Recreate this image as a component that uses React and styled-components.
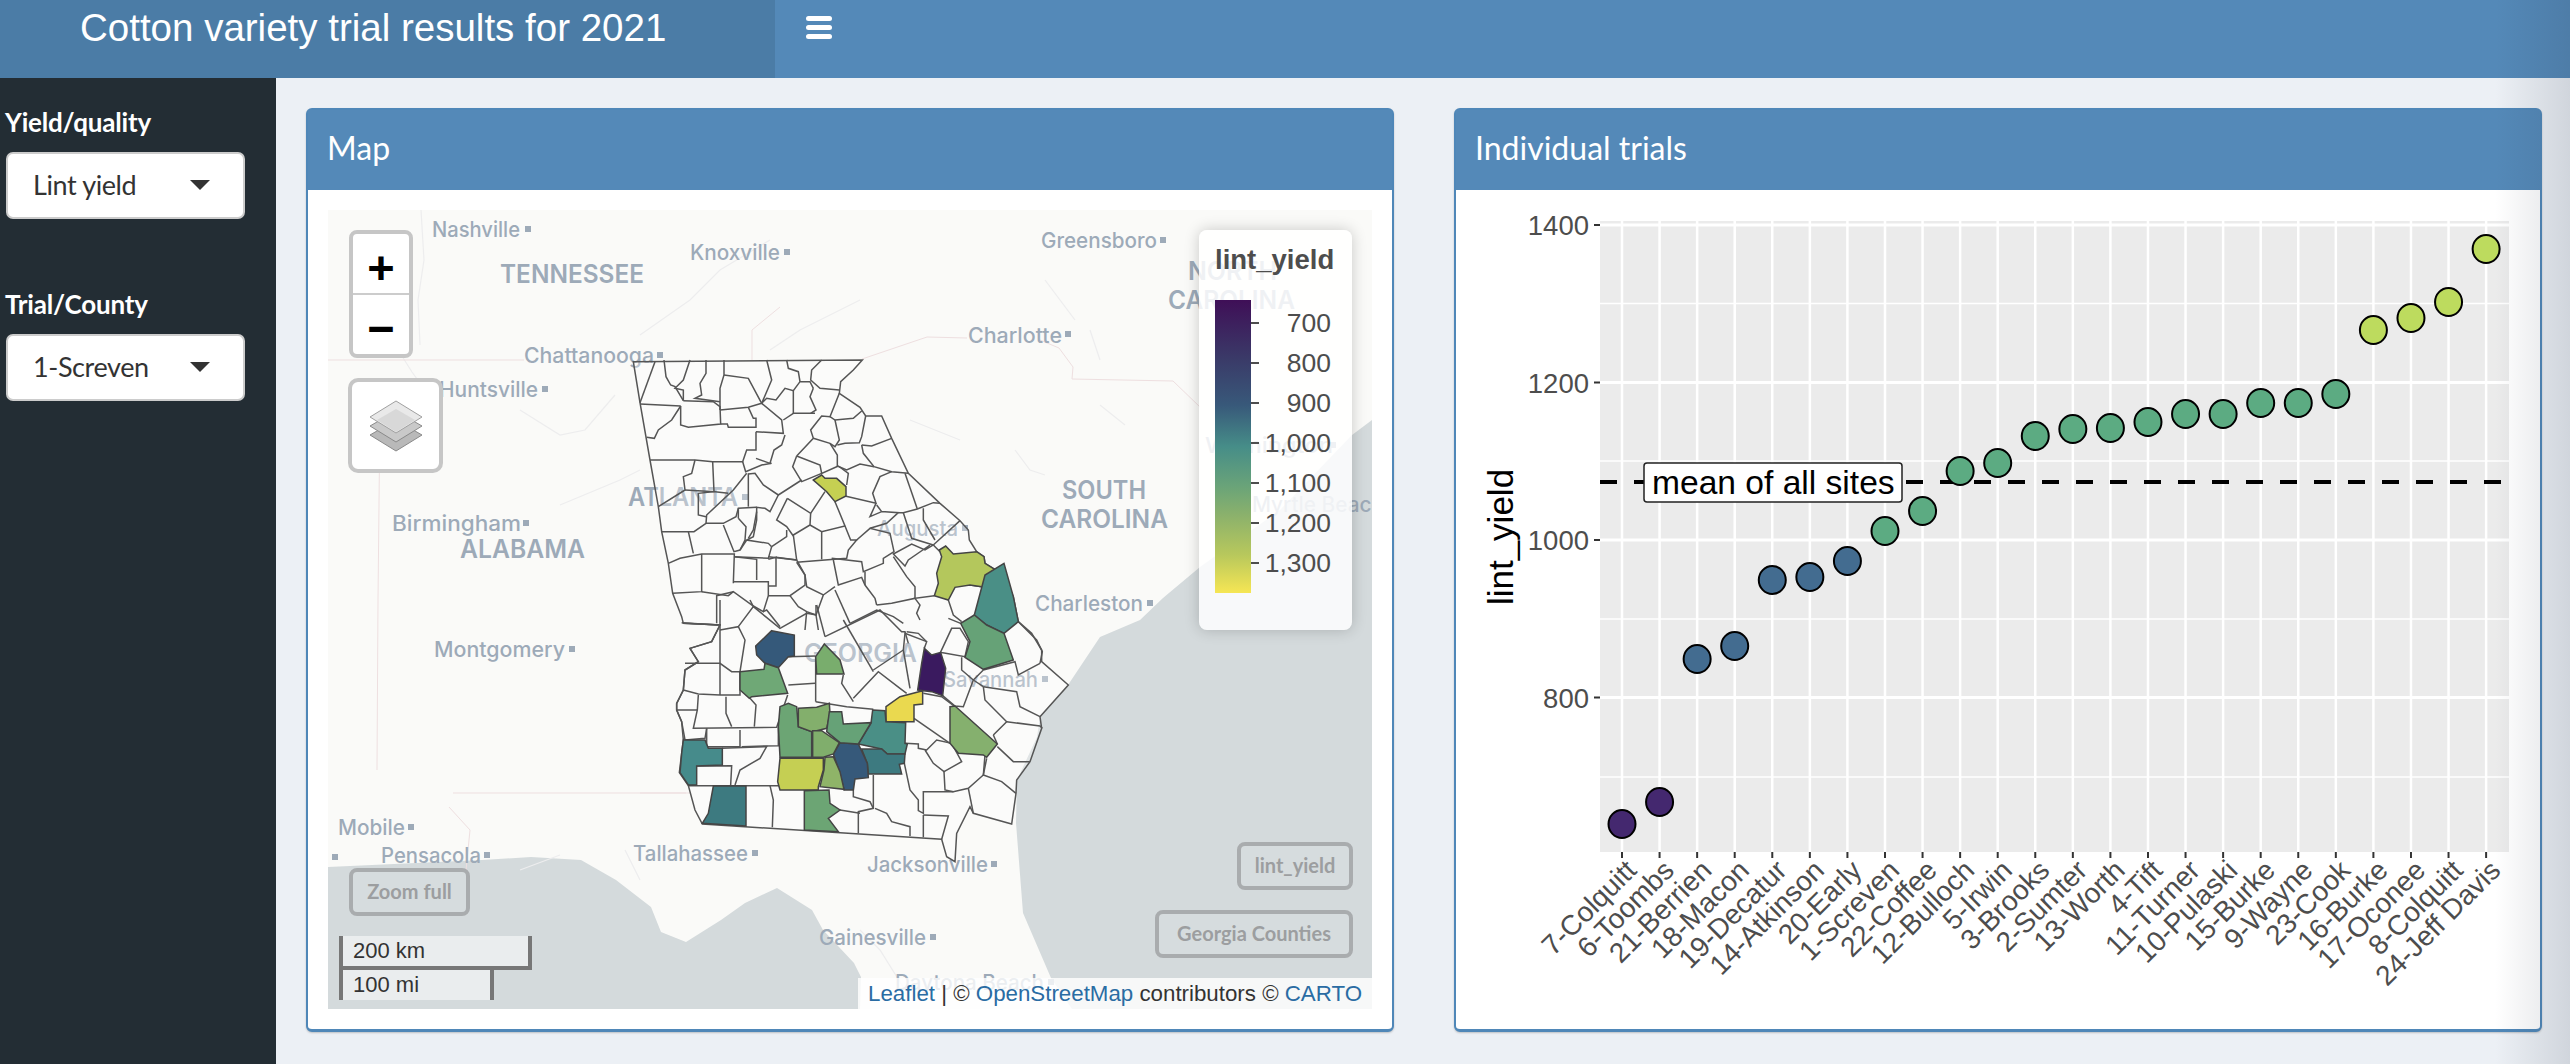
import React from 'react';
import styled, { createGlobalStyle } from 'styled-components';

// county lines traced from the reference, in two local grids
const UPPER_LINES = [
  '165,95 120,218', '120,222 242,228', '192,90 198,140 212,165 225,170 250,212', '270,90 250,150 225,175 250,180 250,212',
  '318,90 318,130 300,160 305,195 285,205 360,215', '372,90 372,135 360,175 360,240', '372,135 445,145 485,220 445,232 360,240',
  '250,212 340,215 360,230 362,282 265,292 242,285 242,228', '242,228 215,270 175,300 163,325 140,322',
  '500,90 515,150 485,220 500,205 528,210 555,175 580,182 600,155 630,155 640,175', '560,90 565,115 595,125 600,155',
  '665,90 635,120 632,150 660,175 718,180', '718,190 690,260 665,258 632,300 640,325 590,378', '580,182 580,250 645,250',
  '640,175 630,200 648,240 632,250', '485,220 545,270 550,310 468,305', '445,232 460,265 468,265 468,292 385,292 382,282 362,282',
  '580,250 550,270', '690,260 705,270 760,265 785,243', '705,270 718,330 705,350 690,340 640,325',
  '797,258 785,320 778,338 735,340 712,345', '875,325 815,348 785,345', '785,345 790,370 822,410 875,425 925,430',
  '875,425 840,440 818,490 828,520 735,498', '822,410 780,402 740,420 712,408 712,375 690,340', '468,305 468,360 440,360 428,395 338,395 285,390 150,390',
  '555,315 545,345 522,360 510,400 468,385', '590,378 660,405 665,430 715,408', '590,378 578,410 605,455 665,430',
  '428,395 437,425 485,405 515,400', '440,430 400,480 320,555 318,580 370,580 408,560 415,535 470,532',
  '445,430 445,530', '445,432 465,430 490,465 535,495 605,450', '535,495 510,545 495,535 470,532 470,570 460,620 440,630 505,640 515,650',
  '562,505 530,570 560,590 580,618', '675,485 632,550 562,505', '632,550 630,585 580,615 590,690', '630,585 665,605 735,588 705,515',
  '665,605 665,688', '735,588 752,630 770,630 745,660 740,685 590,697', '770,630 810,595 870,610 882,665 850,685 850,700 790,725 785,695 695,685',
  '740,465 745,430 715,408', '828,520 810,560 845,545 855,545 895,548 860,580 810,595', '845,545 830,525', '895,548 910,548 952,537 1000,518 1020,520',
  '915,430 952,537', '910,548 935,625 1000,645', '970,535 970,570 1005,630', '1080,572 1000,645 975,660 935,642 880,672 915,708 925,690 990,645',
  '1000,645 1020,665', '1045,810 1060,855 1085,875', '1110,765 1145,770', '285,390 275,430 250,440 255,480 175,530',
  '338,395 342,485 295,490 295,555 318,560', '255,480 345,485 385,490', '205,700 240,685 305,672 403,672 400,760', '305,672 305,785 218,790',
  '305,785 385,797 400,785 460,828 490,845 505,797 505,755 400,755', '403,680 470,688 470,750', '505,688 528,682 528,768 505,768',
  '528,682 590,690 615,735 615,765 570,797 505,797', '265,605 280,670', '185,605 282,605 318,580', '370,585 402,665 420,660 435,630 438,590 415,565',
  '415,535 415,565', '470,545 460,600 445,625', '420,660 440,630', '515,650 505,685 403,680', '515,650 560,620 560,600', '505,680 590,690',
  '590,697 615,735 620,770 670,795 705,770', '700,690 715,765 785,742 795,765 825,805 830,825', '705,780 750,880', '795,725 795,765',
  '880,680 920,740 945,770 945,805 875,820 830,825', '1003,797 945,805 960,825 950,850 960,870', '570,797 595,830 620,845 648,855 670,795',
  '400,785 350,797 350,880', '245,878 355,885', '490,845 500,840 540,890', '620,845 615,900', '648,825 648,855 655,900', '750,880 830,840 880,860 910,880',
];

const LOWER_LINES = [
  '130,70 240,75 215,125 150,145 175,185 135,210 130,270 110,310 110,330 172,330', '240,0 240,285', '130,270 175,282 240,285',
  '240,90 295,80 315,120 300,215 275,215 240,190 135,190', '295,80 340,20 420,85 500,40 530,45', '330,0 340,20', '240,285 300,285 300,215',
  '175,285 172,330 160,385 410,382 443,285', '258,290 258,340 275,380', '330,295 348,315 343,380', '110,330 125,365 135,420 195,415 200,385',
  '200,385 200,440 300,440 300,390', '305,440 415,437 415,382', '247,445 380,440 360,475 300,510 285,555', '170,498 275,497 272,555', '145,557 420,557',
  '390,557 400,600 397,682', '445,255 525,250', '445,170 527,168', '527,168 527,305', '527,305 620,320 700,328', '610,225 605,250 640,305',
  '640,295 715,215 780,265 800,280', '555,110 720,30 785,95 795,95 805,130', '610,60 700,215', '530,15 555,110', '700,210 790,150', '790,150 795,100 860,125 853,145',
  '790,150 810,265', '860,125 835,100 800,95', '900,160 935,85 960,85 985,125 975,170 900,157', '962,70 925,55', '965,172 965,210 1000,240 1030,210',
  '1030,210 1125,185 1135,225 1200,190', '1000,240 970,320 945,318 908,287', '1030,260 1035,300 1100,365 1060,405', '1100,365 1200,378 1207,385',
  '1030,260 1130,275 1140,320 1200,350', '1000,240 1030,260', '850,280 905,290 945,320', '822,355 930,430', '795,430 835,432 835,445 860,450 890,420 935,430 965,485 912,515 880,490 855,450',
  '912,515 915,570 940,575 985,565 1030,525 1035,465', '1072,432 1060,405', '1040,475 1030,525 1085,545 1128,580', '1072,440 1120,485 1170,485',
  '793,490 810,570 835,600 835,632 850,640 850,575 940,575', '700,525 700,625 655,635 655,700', '705,625 740,640 755,665 810,680 810,708',
  '850,645 925,648 905,718', '850,645 850,712', '640,545 640,590 690,605 700,625', '600,630 660,640', '1135,65 1190,120 1207,155 1200,190', '985,565 1000,640',
];

const GEORGIA_OUTLINE = '100,95 787,90 760,120 722,155 718,190 780,232 797,258 845,258 875,325 925,430 1020,520 1080,572 1105,600 1108,630 1130,665 1152,680 1155,700 1212,735 1240,800 1255,875 1295,910 1325,960 1325,995 1405,1065 1320,1160 1325,1195 1290,1295 1250,1350 1248,1390 1235,1482 1120,1450 1110,1430 1070,1510 1065,1595 1040,1580 1025,1528 307,1482 285,1440 265,1367 238,1328 245,1270 250,1230 245,1175 230,1140 230,1120 250,1080 255,1020 295,995 270,955 335,935 360,885 250,880 245,860 218,790 205,700 185,605 175,530 150,390 120,218';

const UPPER_COUNTIES = [
  ['640,450 665,435 675,445 710,445 738,470 738,498 705,515 680,485', '#c5d052'],
  ['1018,660 1037,648 1060,672 1130,665 1152,680 1155,700 1212,735 1155,772 1110,765 1065,772 1045,810 1003,797 1015,760 1010,730 1025,680', '#b4c75c'],
];

const LOWER_COUNTIES = [
  ['395,92 463,105 463,168 445,170 415,203 375,190 350,165 347,138', '#35597a'],
  ['300,215 372,208 375,190 415,203 443,280 335,290 328,295 300,270', '#6fa876'],
  ['553,132 600,180 612,222 530,222 527,170', '#79ad6d'],
  ['1003,45 1035,-75 1092,-110 1120,-10 1135,65 1092,100 1040,75', '#4a8f86'],
  ['1003,45 1040,75 1092,100 1120,180 1030,208 975,172 990,125 962,70', '#66a277'],
  ['853,145 875,165 902,157 917,205 908,287 875,275 833,270 845,190', '#3a1a5f'],
  ['848,272 848,312 822,315 822,365 738,365 738,320 780,290', '#ead94f'],
  ['698,330 735,332 738,365 797,368 795,430 802,432 795,462 742,462 725,447 655,432 693,370', '#4a8f86'],
  ['665,447 725,447 742,462 795,462 793,490 778,493 785,522 685,522 682,490', '#3d7a80'],
  ['580,462 600,428 655,432 682,490 685,533 645,537 640,570 612,570 600,520', '#36597a'],
  ['930,320 945,318 1072,432 1040,472 1030,465 955,460 930,430', '#85b06e'],
  ['420,320 445,310 470,320 475,380 515,395 515,472 420,472 415,380', '#6ca574'],
  ['475,325 530,322 568,310 570,340 560,385 530,392 515,395 475,380', '#83af6c'],
  ['568,335 605,335 610,372 693,368 655,432 600,428 560,395', '#66a277'],
  ['518,392 545,392 598,428 580,462 550,472 518,472', '#80ae6c'],
  ['420,475 550,475 550,510 535,560 535,570 420,570 413,545', '#c5cf53'],
  ['555,472 580,470 600,515 612,568 540,560 552,510', '#8fb468'],
  ['130,420 195,420 205,445 247,445 247,495 170,498 170,555 145,555 120,518 125,460', '#468b8b'],
  ['220,558 318,558 318,678 187,670 205,640', '#3d7a80'],
  ['493,572 567,570 570,610 600,630 565,655 595,695 493,690', '#6ca574'],
];

const WATER = [
  '328,867 482,860 531,857 581,860 616,880 651,907 661,932 686,942 721,920 745,903 777,888 812,910 823,930 854,963 861,977 860,1009 328,1009',
  '1372,420 1352,435 1280,510 1200,567 1163,598 1140,620 1100,637 1068,685 1040,717 1037,737 1017,780 1016,823 1023,913 1051,978 1072,1009 1372,1009',
];

const BORDERS = [
  '328,360 524,360', '862,359 927,337 967,338', '1059,348 1073,367 1072,379 1173,381 1200,407', '752,360 752,330 780,307',
  '380,410 378,600 377,770', '453,793 686,793', '449,807 470,830 466,870', '640,793 690,793', '1059,348 1040,340',
];

const RIVERS = [
  '421,210 424,260 418,300 420,345', '395,345 412,372 425,390', '520,410 560,435 585,430 615,395', '640,335 690,300 720,270 770,240',
  '560,505 620,480 640,470', '770,350 800,330 860,300', '910,420 935,430 960,440', '1045,280 1060,300 1075,320', '1100,405 1125,425',
  '1015,450 1030,470 1045,475', '1090,330 1100,360', '860,930 880,950 905,990', '625,850 640,880', '520,870 560,855',
];

// name, x, y, width, size, weight
const PLACES = [
  ['Nashville', 432, 229, 88, 21, 500], ['TENNESSEE', 500, 274, 144, 25, 600], ['Knoxville', 690, 252, 90, 21, 500],
  ['Chattanooga', 524, 355, 130, 21, 500], ['Huntsville', 439, 389, 99, 21, 500], ['ATLANTA', 628, 497, 110, 25, 600],
  ['Greensboro', 1041, 240, 116, 21, 500], ['NORTH', 1188, 271, 89, 25, 600], ['CAROLINA', 1168, 300, 127, 25, 600],
  ['Charlotte', 968, 335, 94, 21, 500], ['SOUTH', 1062, 490, 84, 25, 600], ['CAROLINA', 1041, 519, 127, 25, 600],
  ['Charleston', 1035, 603, 108, 21, 500], ['Myrtle Beach', 1252, 504, 132, 21, 500], ['Wilmington', 1205, 445, 128, 21, 500],
  ['Augusta', 877, 528, 81, 21, 500], ['GEORGIA', 804, 653, 113, 25, 600], ['Savannah', 943, 679, 95, 21, 500],
  ['Birmingham', 392, 523, 129, 21, 500], ['ALABAMA', 460, 549, 125, 25, 600], ['Montgomery', 434, 649, 131, 21, 500],
  ['Mobile', 338, 827, 67, 21, 500], ['Pensacola', 381, 855, 100, 21, 500], ['Tallahassee', 633, 853, 115, 21, 500],
  ['Jacksonville', 867, 864, 121, 21, 500], ['Gainesville', 819, 937, 107, 21, 500], ['Daytona Beach', 895, 982, 149, 21, 500],
];

const MARKERS = [
  [528, 229], [787, 252], [660, 355], [545, 389], [745, 497], [1163, 240], [1068, 334], [1150, 603], [965, 528], [1045, 679],
  [526, 523], [572, 649], [411, 827], [487, 855], [335, 857], [755, 853], [994, 864], [933, 937], [1333, 445], [1051, 982],
];

const TRIALS = [
  ['7-Colquitt', 824], ['6-Toombs', 802], ['21-Berrien', 659], ['18-Macon', 646], ['19-Decatur', 580], ['14-Atkinson', 577],
  ['20-Early', 561], ['1-Screven', 531], ['22-Coffee', 511], ['12-Bulloch', 471], ['5-Irwin', 463], ['3-Brooks', 436],
  ['2-Sumter', 429], ['13-Worth', 428], ['4-Tift', 422], ['11-Turner', 414], ['10-Pulaski', 414], ['15-Burke', 403],
  ['9-Wayne', 403], ['23-Cook', 394], ['16-Burke', 330], ['17-Oconee', 318], ['8-Colquitt', 302], ['24-Jeff Davis', 249],
];

const trialX = (i) => 1622 + i * 37.57;
const dotColor = (i) => (i < 2 ? '#44286f' : i < 7 ? '#436c90' : i < 20 ? '#5cab82' : '#bddb5e');
const LEGEND_TICKS = ['700', '800', '900', '1,000', '1,100', '1,200', '1,300'];

const GlobalStyle = createGlobalStyle`
  html, body {
    margin: 0;
    height: 100%;
    overflow: hidden;
    background: #ecf0f5;
  }
`;

const Page = styled.div`
  position: relative;
  width: 2570px;
  height: 1064px;
  overflow: hidden;
  display: grid;
  grid-template-columns: 276px 1fr;
  grid-template-rows: 78px 1fr;
  font-family: Lato, "Open Sans", sans-serif;
`;

const Header = styled.header`
  grid-column: 1 / 3;
  display: flex;
  background: #5489b8;
`;

const Logo = styled.div`
  width: 775px;
  height: 78px;
  box-sizing: border-box;
  padding: 6px 0 0 80px;
  background: #4b7ca6;
  color: #fff;
  font: 400 38.5px/44px "Liberation Sans", sans-serif;
`;

const MenuToggle = styled.button`
  display: flex;
  flex-direction: column;
  gap: 4px;
  width: 26px;
  margin: 16px 0 0 31px;
  padding: 0;
  border: 0;
  background: none;
  span {
    display: block;
    height: 5px;
    border-radius: 3px;
    background: #fff;
  }
`;

const Sidebar = styled.aside`
  background: #232d34;
  padding: 26px 0 0 6px;
`;

const Field = styled.div`
  margin-bottom: 67px;
`;

const FieldLabel = styled.label`
  display: block;
  height: 36px;
  margin: 0 0 12px -1px;
  color: #fff;
  font-size: 26px;
  font-weight: 700;
  line-height: 36px;
  letter-spacing: -0.2px;
`;

const SelectBox = styled.div`
  position: relative;
  width: 239px;
  height: 67px;
  box-sizing: border-box;
  padding-left: 25px;
  background: #fff;
  border: 2px solid #ccc;
  border-radius: 7px;
  color: #333;
  font-size: 27px;
  line-height: 62px;
  letter-spacing: -0.4px;
  &::after {
    content: '';
    position: absolute;
    top: 26px;
    left: 182px;
    border-style: solid;
    border-width: 10px 10px 0;
    border-color: #333 transparent transparent;
  }
`;

const Main = styled.main`
  display: flex;
  gap: 60px;
  padding: 30px 28px 33px 30px;
  background: #ecf0f5;
  min-width: 0;
`;

const Box = styled.section`
  width: ${(p) => p.$width}px;
  display: flex;
  flex-direction: column;
  box-sizing: border-box;
  background: #fff;
  border: 2px solid #4f87b8;
  border-bottom-width: 3px;
  border-radius: 6px;
  box-shadow: 0 1px 2px rgba(0, 0, 0, 0.2);
`;

const BoxTitle = styled.h3`
  height: 80px;
  margin: 0;
  padding-left: 19px;
  background: #5489b8;
  color: #fff;
  font-size: 32px;
  font-weight: 400;
  line-height: 76px;
`;

const MapBody = styled.div`
  flex: 1;
  padding: 20px 20px 19px;
`;

const MapFrame = styled.div`
  position: relative;
  width: 1044px;
  height: 799px;
  overflow: hidden;
  background: #fafaf8;
`;

const MapArt = styled.svg`
  display: block;
`;

const ZoomControl = styled.div`
  position: absolute;
  left: 21px;
  top: 20px;
  width: 64px;
  height: 128px;
  box-sizing: border-box;
  background: #fff;
  border: 4px solid #c6c6c6;
  border-radius: 8px;
  display: flex;
  flex-direction: column;
`;

const ZoomButton = styled.div`
  flex: 1;
  display: flex;
  align-items: center;
  justify-content: center;
  padding-top: 8px;
  color: #000;
  font: 700 47px/1 "Liberation Sans", sans-serif;
  border-bottom: ${(p) => (p.$divider ? '2px solid #ccc' : '0')};
`;

const LayersControl = styled.div`
  position: absolute;
  left: 20px;
  top: 168px;
  width: 95px;
  height: 95px;
  box-sizing: border-box;
  background: #fff;
  border: 4px solid #c6c6c6;
  border-radius: 10px;
  display: flex;
  align-items: center;
  justify-content: center;
`;

const Legend = styled.div`
  position: absolute;
  left: 871px;
  top: 20px;
  width: 153px;
  height: 400px;
  box-sizing: border-box;
  padding: 12px 21px 0 16px;
  background: rgba(255, 255, 255, 0.84);
  border-radius: 8px;
  box-shadow: 0 0 15px rgba(0, 0, 0, 0.2);
  color: #4d4d4d;
  font-family: "Liberation Sans", sans-serif;
`;

const LegendTitle = styled.div`
  height: 58px;
  font-size: 27.5px;
  font-weight: 700;
  line-height: 36px;
  white-space: nowrap;
`;

const LegendScale = styled.div`
  display: flex;
`;

const LegendBar = styled.div`
  width: 36px;
  height: 293px;
  background: linear-gradient(#3f0f57, #3a3a68 20%, #38597a 36%, #468d88 50%, #6ba478 64%, #8db26b 74%, #b8c85c 87%, #f6e654);
`;

const LegendTicks = styled.div`
  flex: 1;
  padding-top: 3px;
`;

const LegendTick = styled.div`
  display: flex;
  align-items: center;
  height: 40px;
  font-size: 26.5px;
  &::before {
    content: '';
    width: 8px;
    height: 2px;
    background: #4d4d4d;
  }
  span {
    flex: 1;
    text-align: right;
  }
`;

const MapButton = styled.div`
  box-sizing: border-box;
  width: ${(p) => p.$width}px;
  height: 48px;
  background: rgba(255, 255, 255, 0.06);
  border: 4px solid #a9acae;
  border-radius: 8px;
  color: #9c9ea0;
  font-size: 20px;
  font-weight: 700;
  line-height: 39px;
  text-align: center;
  white-space: nowrap;
`;

const ZoomFull = styled.div`
  position: absolute;
  left: 21px;
  top: 658px;
`;

const LayerButtons = styled.div`
  position: absolute;
  right: 19px;
  bottom: 51px;
  display: flex;
  flex-direction: column;
  align-items: flex-end;
  gap: 20px;
`;

const ScaleBars = styled.div`
  position: absolute;
  left: 11px;
  top: 726px;
`;

const ScaleBar = styled.div`
  box-sizing: border-box;
  width: ${(p) => p.$width}px;
  height: ${(p) => (p.$top ? 34 : 30)}px;
  padding-left: 10px;
  background: rgba(255, 255, 255, 0.5);
  border: 4px solid #777;
  border-top: 0;
  border-bottom-width: ${(p) => (p.$top ? 4 : 0)}px;
  color: #333;
  font: 22px/30px "Liberation Sans", sans-serif;
`;

const Attribution = styled.div`
  position: absolute;
  right: 0;
  bottom: 0;
  height: 31px;
  padding: 0 10px;
  background: rgba(255, 255, 255, 0.8);
  color: #333;
  font: 22.3px/31px "Liberation Sans", sans-serif;
  white-space: nowrap;
  a {
    color: #2a6ca3;
    text-decoration: none;
  }
`;

const ChartArt = styled.svg`
  display: block;
  font-family: "Liberation Sans", sans-serif;
`;

const Vignette = styled.div`
  position: absolute;
  top: 0;
  right: 0;
  width: 75px;
  height: 100%;
  background: linear-gradient(to right, rgba(40, 50, 70, 0), rgba(40, 50, 70, 0.14));
  pointer-events: none;
`;

const MapDrawing = () => (
  <MapArt width="1044" height="799" viewBox="328 210 1044 799">
    {WATER.map((points) => <polygon key={points} points={points} fill="#d4dadc" />)}
    {RIVERS.map((points) => <polyline key={points} points={points} fill="none" stroke="#ededee" strokeWidth="1.2" />)}
    {BORDERS.map((points) => <polyline key={points} points={points} fill="none" stroke="#eedfe0" strokeWidth="1" />)}
    {PLACES.map(([name, x, y, width, size, weight]) => (
      <text
        key={name + x}
        x={x}
        y={y}
        dy="0.36em"
        textLength={width}
        lengthAdjust="spacingAndGlyphs"
        fontFamily="Inter, 'Open Sans', sans-serif"
        fontSize={size}
        fontWeight={weight}
        fill="#9daab8"
      >
        {name}
      </text>
    ))}
    {MARKERS.map(([x, y]) => <rect key={x + '-' + y} x={x - 3} y={y - 3} width="6" height="6" fill="#9daab8" />)}
    <g transform="translate(600 330) scale(0.33333)">
      <polygon points={GEORGIA_OUTLINE} fill="#fff" fillOpacity="0.3" stroke="#555" strokeWidth="1.5" vectorEffect="non-scaling-stroke" />
      {UPPER_LINES.map((points) => (
        <polyline key={points} points={points} fill="none" stroke="#555" strokeWidth="1.5" vectorEffect="non-scaling-stroke" />
      ))}
      {UPPER_COUNTIES.map(([points, color]) => (
        <polygon key={points} points={points} fill={color} stroke="#444" strokeWidth="1.5" vectorEffect="non-scaling-stroke" />
      ))}
    </g>
    <g transform="translate(640 600) scale(0.33333)">
      {LOWER_LINES.map((points) => (
        <polyline key={points} points={points} fill="none" stroke="#555" strokeWidth="1.5" vectorEffect="non-scaling-stroke" />
      ))}
      {LOWER_COUNTIES.map(([points, color]) => (
        <polygon key={points} points={points} fill={color} stroke="#444" strokeWidth="1.5" vectorEffect="non-scaling-stroke" />
      ))}
    </g>
  </MapArt>
);

const LayersIcon = () => (
  <svg width="54" height="52" viewBox="0 0 54 52">
    <path d="M27 20 L53 35 L27 51 L1 35 Z" fill="#b9b9b9" stroke="#8a8a8a" strokeWidth="1" />
    <path d="M27 11 L53 26 L27 42 L1 26 Z" fill="#c9c9c9" stroke="#8a8a8a" strokeWidth="1" />
    <path d="M27 1 L53 17 L27 33 L1 17 Z" fill="#e9e9e9" stroke="#a0a0a0" strokeWidth="1" />
    <path d="M27 9 L46 20 L27 32 L8 20 Z" fill="#d8d8d8" />
  </svg>
);

const Chart = () => {
  const majors = [[1400, 225], [1200, 382.5], [1000, 540], [800, 697.5]];
  const minors = [303.5, 461, 619, 777];
  return (
    <ChartArt width="1084" height="839" viewBox="1456 190 1084 839">
      <rect x="1600" y="221" width="909" height="631" fill="#ebebeb" />
      {minors.map((y) => <line key={y} x1="1600" x2="2509" y1={y} y2={y} stroke="#fff" strokeWidth="1.5" />)}
      {majors.map(([, y]) => <line key={y} x1="1600" x2="2509" y1={y} y2={y} stroke="#fff" strokeWidth="3" />)}
      {TRIALS.map(([name], i) => (
        <line key={name} x1={trialX(i)} x2={trialX(i)} y1="221" y2="852" stroke="#fff" strokeWidth="2.5" />
      ))}
      <line x1="1600" x2="2509" y1="482" y2="482" stroke="#000" strokeWidth="4" strokeDasharray="17 17" />
      {TRIALS.map(([name, y], i) => (
        <ellipse key={name} cx={trialX(i)} cy={y} rx="13.5" ry="14" fill={dotColor(i)} stroke="#000" strokeWidth="2" />
      ))}
      <rect x="1644" y="463" width="258" height="39" rx="3" fill="#fff" stroke="#222" strokeWidth="1.5" />
      <text x="1652" y="494" fontSize="33.6" fill="#000">mean of all sites</text>
      {majors.map(([label, y]) => (
        <g key={label}>
          <text x="1589" y={y + 10} fontSize="27.5" fill="#4d4d4d" textAnchor="end">{label}</text>
          <line x1="1594" x2="1600" y1={y} y2={y} stroke="#333" strokeWidth="2" />
        </g>
      ))}
      <text transform="translate(1513 537) rotate(-90)" fontSize="35" fill="#000" textAnchor="middle">lint_yield</text>
      {TRIALS.map(([name], i) => (
        <g key={name}>
          <line x1={trialX(i)} x2={trialX(i)} y1="852" y2="858" stroke="#333" strokeWidth="2" />
          <text
            transform={`translate(${trialX(i) + 16} 872) rotate(-45)`}
            fontSize="28"
            fill="#4d4d4d"
            textAnchor="end"
          >
            {name}
          </text>
        </g>
      ))}
    </ChartArt>
  );
};

const App = () => (
  <Page>
    <GlobalStyle />
    <Header>
      <Logo>Cotton variety trial results for 2021</Logo>
      <MenuToggle aria-label="Toggle navigation"><span /><span /><span /></MenuToggle>
    </Header>
    <Sidebar>
      <Field>
        <FieldLabel>Yield/quality</FieldLabel>
        <SelectBox>Lint yield</SelectBox>
      </Field>
      <Field>
        <FieldLabel>Trial/County</FieldLabel>
        <SelectBox>1-Screven</SelectBox>
      </Field>
    </Sidebar>
    <Main>
      <Box $width={1088}>
        <BoxTitle>Map</BoxTitle>
        <MapBody>
          <MapFrame>
            <MapDrawing />
            <ZoomControl>
              <ZoomButton $divider>+</ZoomButton>
              <ZoomButton>−</ZoomButton>
            </ZoomControl>
            <LayersControl><LayersIcon /></LayersControl>
            <Legend>
              <LegendTitle>lint_yield</LegendTitle>
              <LegendScale>
                <LegendBar />
                <LegendTicks>
                  {LEGEND_TICKS.map((t) => <LegendTick key={t}><span>{t}</span></LegendTick>)}
                </LegendTicks>
              </LegendScale>
            </Legend>
            <ZoomFull><MapButton $width={121}>Zoom full</MapButton></ZoomFull>
            <LayerButtons>
              <MapButton $width={116}>lint_yield</MapButton>
              <MapButton $width={198}>Georgia Counties</MapButton>
            </LayerButtons>
            <ScaleBars>
              <ScaleBar $width={193} $top>200 km</ScaleBar>
              <ScaleBar $width={155}>100 mi</ScaleBar>
            </ScaleBars>
            <Attribution>
              <a href="#leaflet">Leaflet</a> | © <a href="#osm">OpenStreetMap</a> contributors © <a href="#carto">CARTO</a>
            </Attribution>
          </MapFrame>
        </MapBody>
      </Box>
      <Box $width={1088}>
        <BoxTitle>Individual trials</BoxTitle>
        <Chart />
      </Box>
    </Main>
    <Vignette />
  </Page>
);

export default App;
